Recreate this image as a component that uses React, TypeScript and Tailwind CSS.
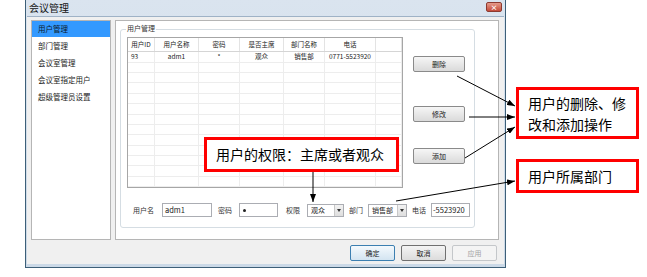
import React from 'react';

const ui = { fontFamily: '"Noto Sans CJK SC", "Noto Sans", sans-serif' };

const menu = ['用户管理', '部门管理', '会议室管理', '会议室指定用户', '超级管理员设置'];

const cols = [
  { title: '用户ID', w: 27 },
  { title: '用户名称', w: 44 },
  { title: '密码', w: 41 },
  { title: '是否主席', w: 44 },
  { title: '部门名称', w: 41 },
  { title: '电话', w: 51 },
  { title: '', w: 26 },
];

const firstRow = ['93', 'adm1', '*', '观众', '销售部', '0771-5523920', ''];

const WinButton = ({ label, kind }: { label: string; kind?: 'default' | 'disabled' }) => {
  const cls =
    kind === 'default'
      ? 'border-[#3c7fb1] text-[#1a1a1a] bg-gradient-to-b from-[#f4f9fd] to-[#d3e4f1]'
      : kind === 'disabled'
      ? 'border-[#c4c7ca] text-[#a3a3a3] bg-[#f4f4f4]'
      : 'border-[#707070] text-[#1a1a1a] bg-gradient-to-b from-[#f4f4f4] to-[#dcdcdc]';
  return (
    <div className={`w-[45px] h-[16px] rounded-[2px] border flex items-center justify-center text-[7px] ${cls}`}>
      {label}
    </div>
  );
};

const SideButton = ({ label }: { label: string }) => (
  <div className="w-[52px] h-[16px] rounded-[2px] border border-[#8a8a8a] bg-gradient-to-b from-[#f6f6f6] to-[#dadada] flex items-center justify-center text-[7px] text-[#1a1a1a]">
    {label}
  </div>
);

const Combo = ({ value, w }: { value: string; w: string }) => (
  <div className={`${w} h-[13px] border border-[#abadb3] bg-white flex text-[7px]`}>
    <div className="flex-1 flex items-center pl-[3px] text-[#222]">{value}</div>
    <div className="w-[9px] border-l border-[#c8c8c8] bg-gradient-to-b from-[#f2f2f2] to-[#dedede] flex items-center justify-center">
      <div className="w-0 h-0 border-l-[2px] border-r-[2px] border-t-[3px] border-l-transparent border-r-transparent border-t-[#333]" />
    </div>
  </div>
);

const Label = ({ text, w, pl }: { text: string; w: string; pl: string }) => (
  <div className={`${w} ${pl} text-[7px] text-[#333] leading-none`}>{text}</div>
);

export default function App() {
  return (
    <div className="relative w-[647px] h-[277px] bg-white overflow-hidden" style={ui}>
      {/* dialog window */}
      <div className="ml-[25px] w-[481px] h-[268px] border border-t-0 border-[#3d5f78] bg-gradient-to-b from-[#dae4ef] to-[#cbd9e7] flex flex-col">
        <div className="h-[16px] flex items-center justify-between pl-[3px] pr-[3px]">
          <span className="text-[10px] text-[#111] leading-none">会议管理</span>
          <div className="w-[16px] h-[10px] mb-[2px] rounded-[2px] border border-[#8c3a30] bg-gradient-to-b from-[#e59a8a] to-[#c44a3a] flex items-center justify-center text-[7px] leading-none text-white font-bold">
            ×
          </div>
        </div>
        <div className="flex-1 mx-[1px] mb-[3px] border-t border-[#9fb2c6] bg-[#f0f0f0] flex flex-col pl-[4px] pt-[3px]">
          <div className="flex gap-[4px]">
            {/* sidebar */}
            <div className="w-[80px] h-[220px] border border-[#b5b5b5] bg-white flex flex-col text-[7.5px] text-[#222]">
              {menu.map((m, i) => (
                <div
                  key={m}
                  className={
                    i === 0
                      ? 'h-[16px] bg-[#3399ff] flex items-center pl-[6px] text-[#0c1a2a]'
                      : 'h-[17px] flex items-center pl-[6px]'
                  }
                >
                  {m}
                </div>
              ))}
            </div>
            {/* right panel */}
            <div className="w-[384px] h-[220px] border border-[#b5b5b5] bg-white pl-[4px] pt-[8px]">
              <div className="relative w-[355px] h-[199px] border border-[#d5dde3] rounded-[3px] pl-[6px] pt-[7px]">
                <div className="absolute left-[5px] -top-[5px] bg-white px-[1px] text-[7px] leading-none text-[#333]">用户管理</div>
                <div className="flex">
                  {/* table */}
                  <div className="w-[276px] h-[151px] border border-[#a6a6a6] bg-white flex flex-col text-[6.5px] text-[#222]">
                    <div className="h-[14px] flex border-b border-[#d5d5d5]">
                      {cols.map((c, i) => (
                        <div
                          key={i}
                          className="h-full flex items-center justify-center border-r border-[#e3e3e3]"
                          style={{ width: c.w }}
                        >
                          {c.title}
                        </div>
                      ))}
                    </div>
                    <div className="flex-1 flex flex-col">
                      {Array.from({ length: 13 }).map((_, r) => (
                        <div key={r} className="flex-1 flex border-b border-[#ededed]">
                          {cols.map((c, i) => (
                            <div
                              key={i}
                              className={`h-full flex items-center border-r border-[#ededed] ${i === 0 ? 'pl-[3px]' : 'justify-center'}`}
                              style={{ width: c.w }}
                            >
                              {r === 0 ? firstRow[i] : ''}
                            </div>
                          ))}
                        </div>
                      ))}
                    </div>
                  </div>
                  {/* action buttons */}
                  <div className="ml-[10px] pt-[19px] flex flex-col">
                    <SideButton label="删除" />
                    <div className="h-[34px]" />
                    <SideButton label="修改" />
                    <div className="h-[26px]" />
                    <SideButton label="添加" />
                  </div>
                </div>
                {/* form row */}
                <div className="mt-[15px] flex items-center pl-[6px]">
                  <Label text="用户名" w="w-[29px]" pl="pl-0" />
                  <div className="w-[50px] h-[14px] border border-[#abadb3] bg-white flex items-center pl-[2px] text-[7.5px] text-[#222]">adm1</div>
                  <Label text="密码" w="w-[27px]" pl="pl-[6px]" />
                  <div className="w-[39px] h-[14px] border border-[#abadb3] bg-white flex items-center pl-[3px]">
                    <div className="w-[3px] h-[3px] rounded-full bg-[#222]" />
                  </div>
                  <Label text="权限" w="w-[29px]" pl="pl-[8px]" />
                  <Combo value="观众" w="w-[37px]" />
                  <Label text="部门" w="w-[24px]" pl="pl-[5px]" />
                  <Combo value="销售部" w="w-[39px]" />
                  <Label text="电话" w="w-[24px]" pl="pl-[5px]" />
                  <div className="w-[39px] h-[14px] border border-[#abadb3] bg-white flex items-center pl-[1px] text-[7.5px] text-[#222] overflow-hidden whitespace-nowrap">-5523920</div>
                </div>
              </div>
            </div>
          </div>
          {/* bottom buttons */}
          <div className="mt-[5px] flex justify-end gap-[6px] pr-[7px]">
            <WinButton label="确定" kind="default" />
            <WinButton label="取消" />
            <WinButton label="应用" kind="disabled" />
          </div>
        </div>
      </div>

      {/* annotation arrows */}
      <svg className="absolute inset-0 pointer-events-none" width="647" height="277">
        <defs>
          <marker id="ah" markerWidth="8" markerHeight="6" refX="8" refY="3" orient="auto" markerUnits="userSpaceOnUse">
            <path d="M0,0 L8,3 L0,6 Z" fill="#000" />
          </marker>
        </defs>
        <g stroke="#000" strokeWidth="1" fill="none">
          <line x1="457" y1="76" x2="515" y2="106" markerEnd="url(#ah)" />
          <line x1="469" y1="117" x2="515" y2="117" markerEnd="url(#ah)" />
          <line x1="465" y1="158" x2="515" y2="127" markerEnd="url(#ah)" />
          <line x1="313" y1="172" x2="313" y2="202" markerEnd="url(#ah)" />
          <line x1="396" y1="201" x2="515" y2="181" markerEnd="url(#ah)" />
        </g>
      </svg>

      {/* annotation boxes */}
      <div className="absolute left-[516px] top-[87px] w-[123px] h-[52px] border-[3px] border-[#ff0000] bg-white pl-[9px] pt-[3px] text-[14px] leading-[21px] text-black">
        用户的删除、修<br />改和添加操作
      </div>
      <div className="absolute left-[204px] top-[137px] w-[195px] h-[35px] border-[3px] border-[#ff0000] bg-white pl-[9px] flex items-center text-[14px] text-black">
        用户的权限：主席或者观众
      </div>
      <div className="absolute left-[516px] top-[159px] w-[123px] h-[34px] border-[3px] border-[#ff0000] bg-white pl-[9px] flex items-center text-[14px] text-black">
        用户所属部门
      </div>
    </div>
  );
}
